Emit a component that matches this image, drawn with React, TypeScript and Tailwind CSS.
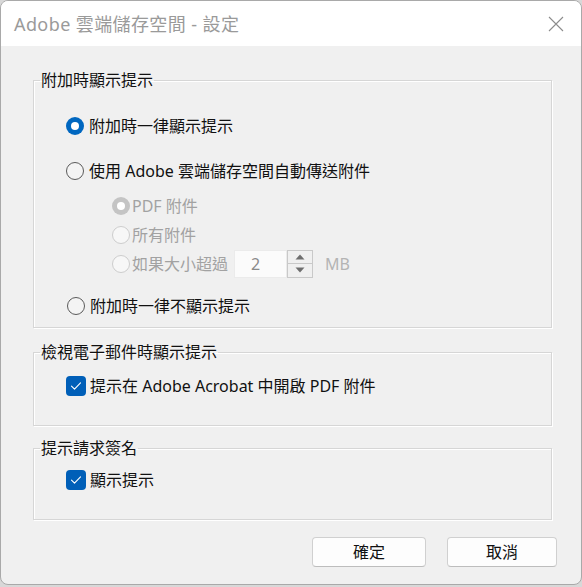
import React from "react";

const FONT = {
  fontFamily: '"Noto Sans", "Noto Sans CJK TC", sans-serif',
};

function Radio({ checked = false, disabled = false }: { checked?: boolean; disabled?: boolean }) {
  if (checked) {
    return (
      <span
        className={
          "flex h-[18px] w-[18px] shrink-0 items-center justify-center rounded-full " +
          (disabled ? "bg-[#c4c4c4]" : "bg-[#0067c0]")
        }
      >
        <span className="h-[8px] w-[8px] rounded-full bg-white" />
      </span>
    );
  }
  return (
    <span
      className={
        "h-[18px] w-[18px] shrink-0 rounded-full border " +
        (disabled ? "border-[#cdcdcd] bg-[#f7f7f7]" : "border-[#5a5a5a] bg-[#f4f4f4]")
      }
    />
  );
}

function Checkbox() {
  return (
    <span className="flex h-[20px] w-[20px] shrink-0 items-center justify-center rounded-[4px] bg-[#005fb8]">
      <svg width="12" height="10" viewBox="0 0 12 10" fill="none">
        <path d="M1.5 5.2 L4.5 8.2 L10.5 1.8" stroke="white" strokeWidth="1.1" strokeLinecap="round" strokeLinejoin="round" />
      </svg>
    </span>
  );
}

function Group({
  label,
  children,
  className = "",
}: {
  label: string;
  children: React.ReactNode;
  className?: string;
}) {
  return (
    <fieldset
      className={
        "ml-[1px] w-[519px] border border-[#d6d6d6] shadow-[inset_1px_1px_0_#ffffff,1px_1px_0_#ffffff] " +
        className
      }
    >
      <legend className="ml-[6px] px-[1px] text-[16px] leading-[18px] text-[#111111]">{label}</legend>
      {children}
    </fieldset>
  );
}

export default function App() {
  return (
    <div className="h-[587px] w-[582px] bg-[#d8d8d8]" style={FONT}>
      <div className="flex h-[585px] w-[582px] flex-col overflow-hidden rounded-[8px] border border-[#a9a9a9] bg-[#f0f0f0]">
        {/* Title bar */}
        <div className="flex h-[45px] shrink-0 items-center justify-between bg-white pl-[13px] pr-[17px]">
          <span className="text-[18px] leading-[20px] tracking-[0.4px] text-[#9a9a9a]">Adobe 雲端儲存空間 - 設定</span>
          <svg width="16" height="16" viewBox="0 0 16 16">
            <path d="M1 1 L15 15 M15 1 L1 15" stroke="#8c8c8c" strokeWidth="1.1" />
          </svg>
        </div>

        {/* Body */}
        <div className="flex flex-1 flex-col pl-[31px] pt-[25px]">
          <Group label="附加時顯示提示" className="pb-[9px]">
            <div className="pl-[32px]">
              <div className="mt-[25px] flex h-[24px] items-center gap-[5px] text-[16px] text-[#111111]">
                <Radio checked />
                <span>附加時一律顯示提示</span>
              </div>
              <div className="mt-[21px] flex h-[24px] items-center gap-[5px] text-[16px] text-[#111111]">
                <Radio />
                <span>使用 Adobe 雲端儲存空間自動傳送附件</span>
              </div>
              <div className="mt-[8px] pl-[46px] text-[16px] text-[#a2a2a2]">
                <div className="flex h-[29px] items-center gap-[2px]">
                  <Radio checked disabled />
                  <span>PDF 附件</span>
                </div>
                <div className="flex h-[29px] items-center gap-[2px]">
                  <Radio disabled />
                  <span>所有附件</span>
                </div>
                <div className="flex h-[29px] items-center">
                  <Radio disabled />
                  <span className="ml-[2px]">如果大小超過</span>
                  <div className="ml-[6px] flex h-[28px] items-stretch">
                    <div className="flex w-[53px] items-center border border-[#ebebeb] bg-[#fbfbfb] pl-[16px] text-[16px] text-[#8a8a8a]">
                      2
                    </div>
                    <div className="flex w-[26px] flex-col border border-[#c9c9c9] bg-[#f0f0f0]">
                      <div className="flex flex-1 items-center justify-center border-b border-[#c9c9c9]">
                        <svg width="10" height="6" viewBox="0 0 10 6">
                          <path d="M5 0.5 L9.5 5.5 L0.5 5.5 Z" fill="#6e6e6e" />
                        </svg>
                      </div>
                      <div className="flex flex-1 items-center justify-center">
                        <svg width="10" height="6" viewBox="0 0 10 6">
                          <path d="M0.5 0.5 L9.5 0.5 L5 5.5 Z" fill="#6e6e6e" />
                        </svg>
                      </div>
                    </div>
                  </div>
                  <span className="ml-[12px] text-[#b4b4b4]">MB</span>
                </div>
              </div>
              <div className="mt-[16px] flex h-[24px] items-center gap-[5px] pl-[1px] text-[16px] text-[#111111]">
                <Radio />
                <span>附加時一律不顯示提示</span>
              </div>
            </div>
          </Group>

          <Group label="檢視電子郵件時顯示提示" className="mt-[15px] pb-[27px]">
            <div className="mt-[13px] flex h-[24px] items-center gap-[4px] pl-[32px] text-[16px] text-[#111111]">
              <Checkbox />
              <span>提示在 Adobe Acrobat 中開啟 PDF 附件</span>
            </div>
          </Group>

          <Group label="提示請求簽名" className="mt-[13px] pb-[27px]">
            <div className="mt-[11px] flex h-[24px] items-center gap-[4px] pl-[32px] text-[16px] text-[#111111]">
              <Checkbox />
              <span>顯示提示</span>
            </div>
          </Group>

          <div className="mt-[17px] flex justify-end gap-[21px] pr-[24px]">
            <button className="h-[30px] w-[114px] rounded-[4px] border border-[#d0d0d0] border-b-[#bdbdbd] bg-[#fdfdfd] text-[16px] text-[#111111]">
              確定
            </button>
            <button className="h-[30px] w-[110px] rounded-[4px] border border-[#d0d0d0] border-b-[#bdbdbd] bg-[#fdfdfd] text-[16px] text-[#111111]">
              取消
            </button>
          </div>
        </div>
      </div>
    </div>
  );
}
